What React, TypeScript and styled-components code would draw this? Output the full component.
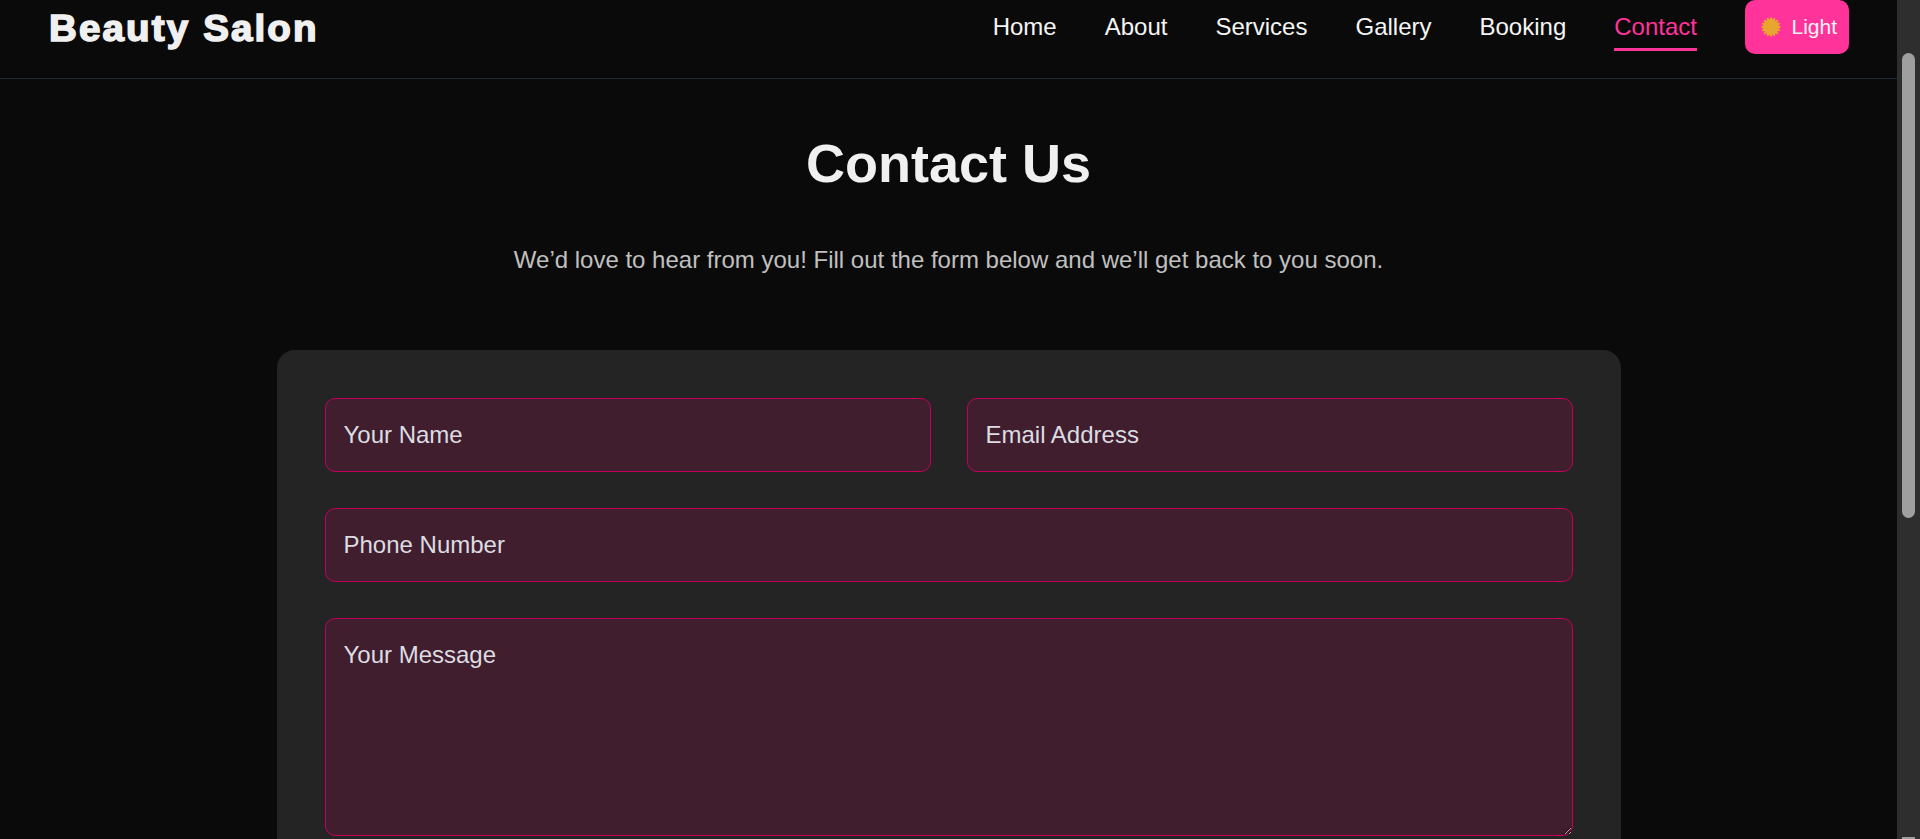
import React from 'react';
import styled, { createGlobalStyle } from 'styled-components';

const Global = createGlobalStyle`
  html, body { margin: 0; padding: 0; height: 100%; overflow: hidden; background: #0a0a0a; }
  * { box-sizing: border-box; }
`;

const Viewport = styled.div`
  display: flex;
  height: 839px;
  overflow: hidden;
  background: #0a0a0a;
  color: #f0f0f0;
  font-family: "Liberation Sans", Arial, sans-serif;
`;

const Page = styled.div`
  flex: 1;
  min-width: 0;
`;

const ScrollTrack = styled.div`
  width: 23px;
  flex: none;
  background: #2e2e2e;
  padding: 53px 5px 0;
`;

const ScrollThumb = styled.div`
  height: 465px;
  border-radius: 7px;
  background: #9f9f9f;
`;

const ScrollEdge = styled.div`
  height: 2px;
  margin-top: 319px;
  background: #9f9f9f;
`;

const Header = styled.header`
  height: 79px;
  display: flex;
  justify-content: space-between;
  align-items: flex-start;
  padding: 0 48px;
  border-bottom: 1px solid #1c2a3a;
`;

const Logo = styled.div`
  margin: 8px 0 0 1px;
  font-size: 36px;
  line-height: 42px;
  font-weight: 700;
  letter-spacing: 2px;
  -webkit-text-stroke: 1.5px #f0f0f0;
  color: #f0f0f0;
  transform: scaleX(1.07);
  transform-origin: left center;
`;

const Nav = styled.nav`
  display: flex;
  align-items: flex-start;
  gap: 48px;
`;

const NavLink = styled.a<{ $active?: boolean }>`
  display: block;
  margin-top: 13px;
  height: 38px;
  font-size: 24px;
  line-height: 28px;
  color: ${p => (p.$active ? '#ff3399' : '#f5f5f5')};
  border-bottom: ${p => (p.$active ? '3px solid #ff3399' : 'none')};
`;

const ThemeButton = styled.button`
  display: flex;
  align-items: center;
  gap: 10px;
  height: 54px;
  margin-left: 0.5px;
  padding: 0 12px 0 16px;
  border: none;
  border-radius: 10px;
  background: #ff3399;
  color: #f5f5f5;
  font-family: inherit;
  font-size: 21px;
`;

const Main = styled.main`
  display: flex;
  flex-direction: column;
  align-items: center;
`;

const Title = styled.h1`
  margin: 53px 0 0;
  font-size: 54px;
  line-height: 62px;
  font-weight: 700;
  color: #f0f0f0;
`;

const Lead = styled.p`
  margin: 52px 0 0;
  font-size: 24px;
  line-height: 28px;
  color: #c0c0c0;
`;

const Card = styled.form`
  width: 1344px;
  margin-top: 76px;
  padding: 48px;
  border-radius: 18px;
  background: #242424;
  display: flex;
  flex-direction: column;
  gap: 36px;
`;

const Row = styled.div`
  display: grid;
  grid-template-columns: 1fr 1fr;
  gap: 36px;
`;

const fieldStyles = `
  display: block;
  width: 100%;
  padding: 18px;
  border: 1px solid #c4005a;
  border-radius: 10px;
  background: #401e2e;
  color: #e6e6e6;
  font-family: "Liberation Sans", Arial, sans-serif;
  font-size: 24px;
  line-height: 36px;
  outline: none;
  &::placeholder { color: #dcdce2; opacity: 1; }
`;

const Input = styled.input`
  ${fieldStyles}
  height: 74px;
`;

const Message = styled.textarea`
  ${fieldStyles}
  height: 218px;
  resize: vertical;
`;

const Sun = () => (
  <svg width="20" height="20" viewBox="0 0 20 20" aria-hidden="true">
    <circle cx="10" cy="10" r="8" fill="#e8a530" />
    <g stroke="#e8a530" strokeWidth="2">
      <path d="M10 0.5V19.5M0.5 10H19.5M3.3 3.3L16.7 16.7M16.7 3.3L3.3 16.7" />
      <path d="M6.4 1.2L13.6 18.8M13.6 1.2L6.4 18.8M1.2 6.4L18.8 13.6M1.2 13.6L18.8 6.4" />
    </g>
  </svg>
);

export default function App() {
  return (
    <>
      <Global />
      <Viewport>
        <Page>
          <Header>
            <Logo>Beauty Salon</Logo>
            <Nav>
              <NavLink>Home</NavLink>
              <NavLink>About</NavLink>
              <NavLink>Services</NavLink>
              <NavLink>Gallery</NavLink>
              <NavLink>Booking</NavLink>
              <NavLink $active>Contact</NavLink>
              <ThemeButton type="button">
                <Sun />
                Light
              </ThemeButton>
            </Nav>
          </Header>
          <Main>
            <Title>Contact Us</Title>
            <Lead>We’d love to hear from you! Fill out the form below and we’ll get back to you soon.</Lead>
            <Card>
              <Row>
                <Input placeholder="Your Name" />
                <Input placeholder="Email Address" />
              </Row>
              <Input placeholder="Phone Number" />
              <Message placeholder="Your Message" />
            </Card>
          </Main>
        </Page>
        <ScrollTrack>
          <ScrollThumb />
          <ScrollEdge />
        </ScrollTrack>
      </Viewport>
    </>
  );
}
